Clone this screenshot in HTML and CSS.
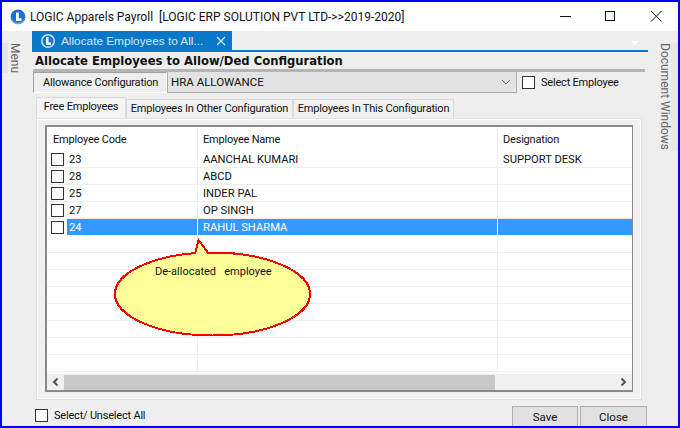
FILE: index.html
```html
<!DOCTYPE html>
<html lang="en">
<head>
<meta charset="utf-8">
<title>LOGIC Apparels Payroll</title>
<link rel="stylesheet" href="styles.css">
</head>
<body>
<div class="window">
  <header class="titlebar">
    <svg class="logo" width="16" height="16" viewBox="0 0 16 16"><defs><radialGradient id="orb" cx="50%" cy="35%" r="65%"><stop offset="0" stop-color="#1f73cf"/><stop offset="0.7" stop-color="#1d6fd0"/><stop offset="1" stop-color="#8cc4ee"/></radialGradient></defs><circle cx="8" cy="8" r="7.500" fill="url(#orb)"/><path d="M6 3.500h2.800v5.700H11.500V12H6z" fill="#fff"/></svg>
    <span class="title-text">LOGIC Apparels Payroll&nbsp; [LOGIC ERP SOLUTION PVT LTD-&gt;&gt;2019-2020]</span>
    <div class="caption">
      <svg width="46" height="16" viewBox="0 0 46 16"><path d="M22 7.500h11" stroke="#111" fill="none"/></svg>
      <svg width="46" height="16" viewBox="0 0 46 16"><rect x="21.500" y="2.500" width="9" height="9" stroke="#111" fill="none"/></svg>
      <svg width="46" height="16" viewBox="0 0 46 16"><path d="M21 2l10.500 10.500M31.500 2L21 12.500" stroke="#111" fill="none"/></svg>
    </div>
  </header>
  <div class="main">
    <aside class="rail rail-left"><span class="rail-label">Menu</span></aside>
    <section class="center">
      <div class="doc-tabs">
        <div class="doc-tab">
          <svg width="16" height="16" viewBox="0 0 16 16"><circle cx="8" cy="8" r="7" fill="#cfe4f6"/><circle cx="8" cy="8" r="5.500" fill="#1a78c8"/><path d="M6 4h2.500v5.500H11V12H6z" fill="#fff"/></svg>
          <span class="doc-tab-text">Allocate Employees to All...</span>
          <svg width="10" height="10" viewBox="0 0 10 10"><path d="M1 1l8 8M9 1l-8 8" stroke="#d5e8f7" stroke-width="1.200" fill="none"/></svg>
        </div>
        <span class="doc-arrow"></span>
      </div>
      <h1 class="heading">Allocate Employees to Allow/Ded Configuration</h1>
      <div class="config">
        <div class="config-label">Allowance Configuration</div>
        <div class="combo"><span>HRA ALLOWANCE</span>
          <svg width="10" height="6" viewBox="0 0 10 6"><path d="M1 1l4 4 4-4" stroke="#666" fill="none"/></svg>
        </div>
        <label class="check-row"><span class="check"></span>Select Employee</label>
      </div>
      <div class="tabs">
        <div class="tab tab-active">Free Employees</div>
        <div class="tab tab-second">Employees In Other Configuration</div>
        <div class="tab tab-third">Employees In This Configuration</div>
      </div>
      <div class="panel">
        <div class="grid">
          <div class="grid-body">
            <div class="row head"><div class="c c1">Employee Code</div><div class="c c2">Employee Name</div><div class="c c3">Designation</div></div>
            <div class="row"><div class="c c1"><span class="check"></span><span class="code">23</span></div><div class="c c2">AANCHAL KUMARI</div><div class="c c3">SUPPORT DESK</div></div>
            <div class="row"><div class="c c1"><span class="check"></span><span class="code">28</span></div><div class="c c2">ABCD</div><div class="c c3"></div></div>
            <div class="row"><div class="c c1"><span class="check"></span><span class="code">25</span></div><div class="c c2">INDER PAL</div><div class="c c3"></div></div>
            <div class="row"><div class="c c1"><span class="check"></span><span class="code">27</span></div><div class="c c2">OP SINGH</div><div class="c c3"></div></div>
            <div class="row selected"><div class="c c1"><span class="check"></span><span class="code">24</span></div><div class="c c2">RAHUL SHARMA</div><div class="c c3"></div></div>
            <div class="row"><div class="c c1"></div><div class="c c2"></div><div class="c c3"></div></div>
            <div class="row"><div class="c c1"></div><div class="c c2"></div><div class="c c3"></div></div>
            <div class="row"><div class="c c1"></div><div class="c c2"></div><div class="c c3"></div></div>
            <div class="row"><div class="c c1"></div><div class="c c2"></div><div class="c c3"></div></div>
            <div class="row"><div class="c c1"></div><div class="c c2"></div><div class="c c3"></div></div>
            <div class="row"><div class="c c1"></div><div class="c c2"></div><div class="c c3"></div></div>
            <div class="row"><div class="c c1"></div><div class="c c2"></div><div class="c c3"></div></div>
            <div class="row"><div class="c c1"></div><div class="c c2"></div><div class="c c3"></div></div>
          </div>
          <div class="scrollbar">
            <svg class="sb-arrow" width="17" height="14" viewBox="0 0 17 14"><path d="M10.500 3.500L7 7l3.500 3.500" stroke="#555" stroke-width="2" fill="none"/></svg>
            <div class="sb-thumb"></div>
            <svg class="sb-arrow" width="17" height="14" viewBox="0 0 17 14"><path d="M6.500 3.500L10 7l-3.500 3.500" stroke="#555" stroke-width="2" fill="none"/></svg>
          </div>
        </div>
      </div>
      <footer class="footer">
        <label class="check-row"><span class="check"></span>Select/ Unselect All</label>
        <div class="buttons"><div class="btn">Save</div><div class="btn">Close</div></div>
      </footer>
    </section>
    <aside class="rail rail-right"><span class="rail-label">Document Windows</span></aside>
  </div>
  <div class="callout">
    <svg width="204" height="100" viewBox="0 0 204 100" shape-rendering="crispEdges"><ellipse cx="102.500" cy="58" rx="97.500" ry="41.500" fill="#ffff99" stroke="#ff0000" stroke-width="2"/><path d="M85 18 L88.500 4 L98.500 17.500" fill="#ffff99" stroke="#ff0000" stroke-width="2"/></svg>
    <span class="callout-text">De-allocated&nbsp;&nbsp; employee</span>
  </div>
</div>
</body>
</html>
```
FILE: styles.css
```css
* { box-sizing: border-box; }
html, body { margin: 0; padding: 0; }
body { width: 680px; height: 428px; overflow: hidden; font-family: Roboto, "Liberation Sans", sans-serif; font-size: 11px; letter-spacing: -0.2px; color: #111; }
.window { position: relative; width: 680px; height: 428px; border: 2px solid #0000f0; background: #eeeeee; display: flex; flex-direction: column; overflow: hidden; }
.titlebar { height: 29px; flex: none; background: #fff; display: flex; align-items: center; padding-left: 8px; }
.title-text { margin-left: 4px; font-size: 12px; letter-spacing: 0; white-space: nowrap; }
.logo { flex: none; }
.caption { margin-left: auto; display: flex; padding-right: 2px; }
.caption svg { display: block; }
.main { flex: 1; display: flex; min-height: 0; }
.rail { flex: none; position: relative; display: flex; padding-top: 12px; }
.rail-left { width: 30px; }
.rail-right { width: 30px; padding-left: 11px; }
.rail-label { writing-mode: vertical-rl; color: #666; font-size: 12px; letter-spacing: 0; display: block; line-height: 12px; white-space: nowrap; }
.rail-left .rail-label { height: 30px; width: 19px; border-left: 6px solid #e5e5e5; padding-left: 1px; }
.rail-right .rail-label { height: 108px; width: 19px; border-right: 7px solid #e7e7e7; }
.center { flex: 1; min-width: 0; display: flex; flex-direction: column; }
.doc-tabs { height: 21px; flex: none; border-bottom: 2px solid #0a78c8; position: relative; display: flex; }
.doc-tab { width: 200px; height: 19px; background: #0a78c8; color: #d5e8f7; display: flex; align-items: center; padding-left: 8px; gap: 5px; font: 11.8px "Liberation Sans", sans-serif; letter-spacing: 0; }
.doc-tab svg:last-child { margin-left: 2px; }
.doc-tab-text { white-space: nowrap; width: 148px; }
.doc-arrow { position: absolute; right: 9px; top: 10px; border: 4px solid transparent; border-top-color: #fff; border-bottom: 0; }
.heading { margin: 3px 0 0 3px; height: 13px; font: bold 11.6px/13px "DejaVu Sans", sans-serif; letter-spacing: 0; color: #111; white-space: nowrap; }
.config { margin: 1px 3px 0 1px; border-top: 3px solid #b4b4b4; height: 24px; display: flex; flex: none; }
.config-label { width: 134px; height: 21px; border: 1px solid; border-color: #a0a0a0 #fff #fff #a0a0a0; padding-left: 9px; line-height: 20px; white-space: nowrap; }
.combo { width: 350px; height: 21px; background: #e3e3e3; border: 1px solid #adadad; border-top: 0; display: flex; align-items: center; justify-content: space-between; padding: 0 5px 0 3px; font-size: 11.5px; letter-spacing: 0; }
.check-row { display: flex; align-items: center; gap: 6px; white-space: nowrap; }
.config .check-row { margin-left: 5px; height: 20px; }
.check { display: block; flex: none; width: 13px; height: 13px; background: #fff; border: 1px solid #333; }
.tabs { display: flex; align-items: flex-end; margin: 4px 0 0 4px; height: 21px; flex: none; position: relative; z-index: 1; }
.tab { height: 19px; background: #f0f0f0; border: 1px solid #d9d9d9; border-bottom: 0; line-height: 18px; text-align: center; white-space: nowrap; }
.tab-active { width: 90px; height: 21px; line-height: 18px; background: #f4f4f4; }
.tab-second { width: 167px; }
.tab-third { width: 161px; }
.panel { margin: 0 6px 0 4px; height: 282px; flex: none; border: 1px solid #e0e0e0; box-shadow: inset 0 0 0 1px #fff; background: #f0f0f0; padding: 6px 8px 8px; }
.grid { height: 267px; border: 2px solid #8a8a8a; border-right-width: 1px; background: #fff; display: flex; flex-direction: column; }
.grid-body { flex: 1; min-height: 0; overflow: hidden; }
.row { display: flex; height: 17px; border-bottom: 1px solid #eeeeee; font-size: 11.200px; letter-spacing: 0; }
.row.head { height: 24px; border-bottom: 0; font-size: 11px; letter-spacing: -0.2px; }
.c { border-right: 1px solid #eeeeee; display: flex; align-items: center; padding-left: 5px; white-space: nowrap; }
.c1 { width: 151px; flex: none; }
.c2 { width: 300px; flex: none; }
.c3 { flex: 1; border-right: 0; }
.head .c1 { padding-left: 6px; }
.row:not(.head) .c1 { padding-left: 4px; gap: 5px; }
.selected { background: linear-gradient(#3399ff, #3399ff) 20px 0 no-repeat; color: #fff; border-bottom-color: #fff; }
.selected .c { border-right-color: #fff; }
.scrollbar { height: 16px; flex: none; background: #f0f0f0; display: flex; align-items: center; }
.sb-thumb { width: 431px; height: 15px; background: #c8c8c8; }
.sb-arrow { flex: none; }
.sb-arrow:last-child { margin-left: auto; }
.footer { flex: 1; display: flex; justify-content: space-between; align-items: flex-start; padding: 0 1px 0 3px; }
.footer .check-row { margin-top: 9px; }
.buttons { display: flex; gap: 2px; margin-top: 6px; }
.btn { width: 66px; height: 24px; background: #e1e1e1; border: 1px solid #adadad; text-align: center; line-height: 21px; font-size: 11.5px; letter-spacing: 0; }
.btn:last-child { width: 67px; }
.callout { position: absolute; left: 108px; top: 234px; width: 204px; height: 100px; }
.callout svg { display: block; }
.callout-text { position: absolute; left: 45px; top: 29px; white-space: nowrap; letter-spacing: 0; }
```
